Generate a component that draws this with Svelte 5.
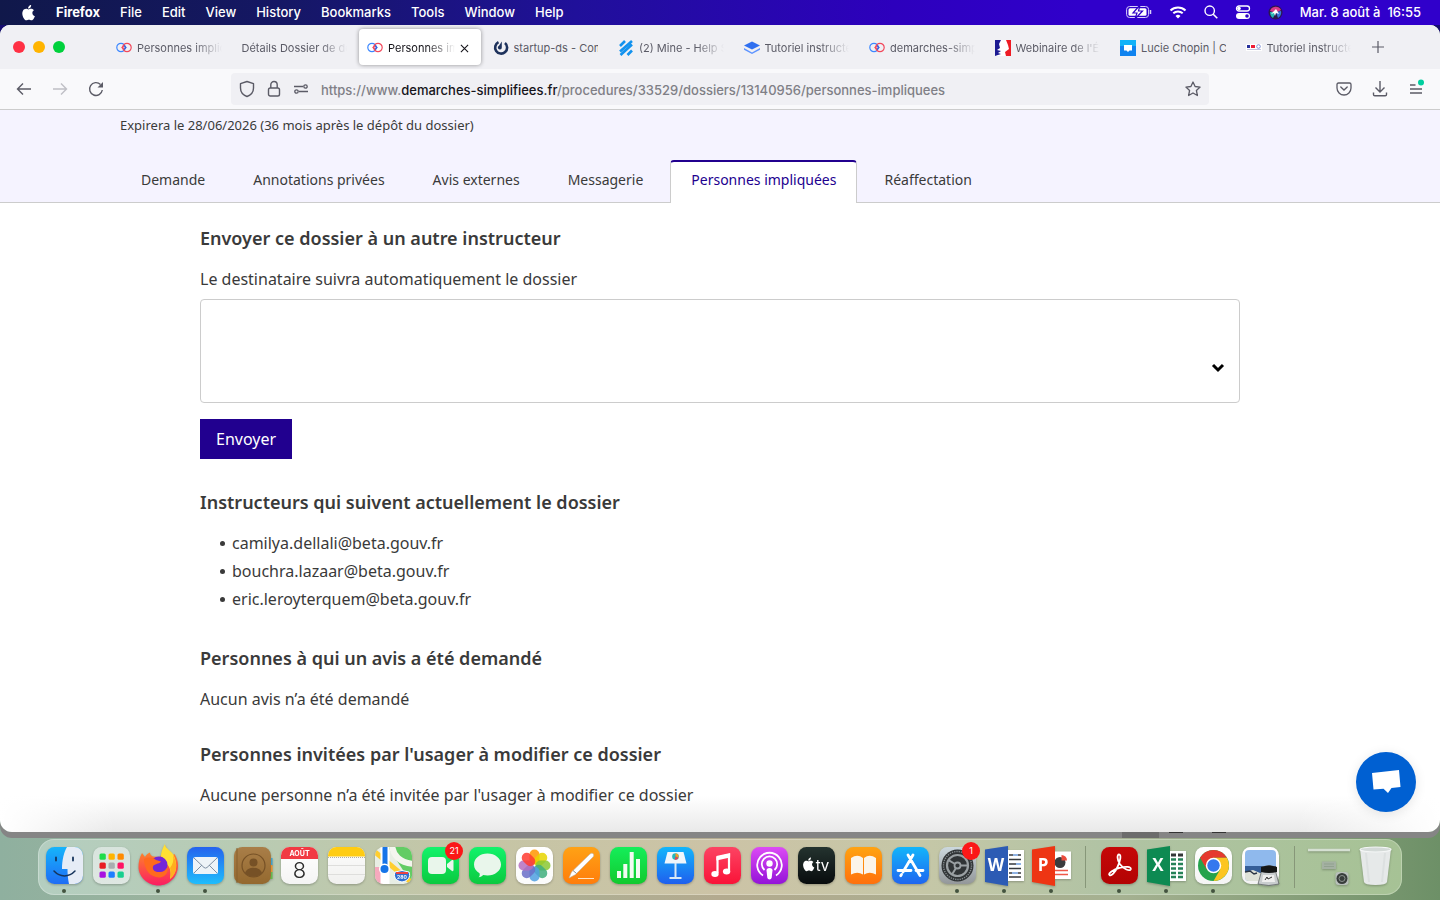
<script>
  const menus = ['File', 'Edit', 'View', 'History', 'Bookmarks', 'Tools', 'Window', 'Help'];

  const browserTabs = [
    { icon: 'rings', title: 'Personnes impliquées' },
    { icon: '', title: 'Détails Dossier de démo' },
    { icon: 'rings', title: 'Personnes impliquées', active: true },
    { icon: 'mattermost', title: 'startup-ds - Com', solid: true },
    { icon: 'help', title: '(2) Mine - Help S' },
    { icon: 'book', title: 'Tutoriel instructeur' },
    { icon: 'rings', title: 'demarches-simplifiees' },
    { icon: 'marianne', title: "Webinaire de l'État" },
    { icon: 'chat', title: 'Lucie Chopin | C', solid: true },
    { icon: 'tiny', title: 'Tutoriel instructeur' }
  ];

  const sections = ['Demande', 'Annotations privées', 'Avis externes', 'Messagerie', 'Personnes impliquées', 'Réaffectation'];
  const current = 'Personnes impliquées';

  const followers = ['camilya.dellali@beta.gouv.fr', 'bouchra.lazaar@beta.gouv.fr', 'eric.leroyterquem@beta.gouv.fr'];

  const dock = [
    [
      { id: 'finder', open: true },
      { id: 'launchpad' },
      { id: 'firefox', open: true },
      { id: 'mail', open: true },
      { id: 'contacts' },
      { id: 'calendar' },
      { id: 'notes' },
      { id: 'maps' },
      { id: 'facetime', badge: '21' },
      { id: 'messages' },
      { id: 'photos' },
      { id: 'pages' },
      { id: 'numbers' },
      { id: 'keynote' },
      { id: 'music' },
      { id: 'podcasts' },
      { id: 'tv' },
      { id: 'books' },
      { id: 'appstore' },
      { id: 'settings', badge: '1', open: true },
      { id: 'word', open: true },
      { id: 'powerpoint', open: true }
    ],
    [
      { id: 'acrobat', open: true },
      { id: 'excel', open: true },
      { id: 'chrome', open: true },
      { id: 'preview' }
    ],
    [{ id: 'minimized' }, { id: 'trash' }]
  ];

  const launchColors = ['#1fdc4a', '#ffb400', '#ff8a00', '#e81c23', '#a9adb0', '#ff1464', '#a80fe0', '#1d7dff', '#18cf8f'];
  const petals = ['#ff9500', '#e6d500', '#8ac832', '#3fae7c', '#4f9fe0', '#6a6fc8', '#b56fc0', '#ff3b30'];
  const applePath = 'M11.6 8.5c0-1.7 1.4-2.5 1.5-2.6-.8-1.2-2.1-1.4-2.500-1.400-1.100-.1-2.100.6-2.600.6s-1.400-.6-2.300-.6C4.500 4.500 3.400 5.200 2.800 6.300c-1.300 2.200-.3 5.500.9 7.300.6.9 1.300 1.900 2.300 1.800.9 0 1.300-.6 2.400-.6s1.400.6 2.400.6 1.600-.9 2.200-1.800c.7-1 1-2 1-2-.1 0-2.400-.9-2.400-3.100zM9.800 3.300c.5-.6.800-1.400.7-2.300-.7 0-1.600.5-2.100 1.100-.5.5-.9 1.400-.8 2.200.9.1 1.700-.4 2.200-1z';
</script>

{#snippet favicon(kind)}
  <svg class="fav" viewBox="0 0 16 16" aria-hidden="true">
    {#if kind === 'rings'}
      <g fill="none" stroke-width="1.200">
        <circle cx="5" cy="7.500" r="4.200" stroke="#3b87ff" />
        <circle cx="11" cy="7.500" r="4.200" stroke="#f2495c" />
        <path d="M8 5.500l2 2-2 2" stroke="#3b5fd9" />
        <path d="M8 5.500l-2 2 2 2" stroke="#f2495c" />
      </g>
    {:else if kind === 'mattermost'}
      <path d="M5.500 2.200a6 6 0 1 0 6.500.8" fill="none" stroke="#1e325c" stroke-width="2.600" />
      <path d="M8.800 1.500v6a2 2 0 1 1-2.800-1.800z" fill="#1e325c" />
    {:else if kind === 'help'}
      <path d="M2 6l5-5M2 11.500L14 1M2.500 15L14 4.500M9.500 15l4.500-4.500" stroke="#1292ee" stroke-width="2.600" />
    {:else if kind === 'book'}
      <path d="M0 5.500L8 1.500l8 4-8 4z" fill="#2f6ff0" />
      <path d="M0 8l8 4.500L16 8v1.800L8 14 0 9.800z" fill="#5c93ff" />
    {:else if kind === 'marianne'}
      <path d="M0 0h16v16H0z" fill="#fff" />
      <path d="M0 0h6L4 4l1 4-3 2 4 1-3 2 3 1-6 2z" fill="#1c1a92" />
      <path d="M11 0h5v16h-5l-1-4 4-3-1-4z" fill="#ee1c25" />
    {:else if kind === 'chat'}
      <path d="M0 0h16v16H0z" fill="#1083ef" />
      <path d="M0 0h16v6H0z" fill="#12b2f8" />
      <path d="M4 5h8v5.500H9.500L8 12l-1.500-1.500H4z" fill="#fff" />
    {:else if kind === 'tiny'}
      <path d="M0 4h16v7H0z" fill="#fff" />
      <path d="M1 5h3v3H1z" fill="#26309b" /><path d="M5 5h4v3H5z" fill="#ed1c35" />
      <circle cx="12.500" cy="6.500" r="1.800" fill="none" stroke="#8092d8" />
      <path d="M1 9.500h14" stroke="#c3c3df" />
    {/if}
  </svg>
{/snippet}

{#snippet gradient(id, top, bottom)}
  <defs>
    <linearGradient {id} x1="0" y1="0" x2="0" y2="1">
      <stop offset="0" stop-color={top} /><stop offset="1" stop-color={bottom} />
    </linearGradient>
  </defs>
{/snippet}

{#snippet tile(id, top, bottom)}
  {@render gradient('g-' + id, top, bottom)}
  <rect width="37" height="37" rx="8.500" fill="url(#g-{id})" />
{/snippet}

{#snippet appIcon(id)}
  <svg class="app-icon" viewBox="0 0 37 37" aria-hidden="true">
    {#if id === 'finder'}
      {@render tile(id, '#16b4fb', '#1f6df5')}
      <path d="M21 0h7.500A8.500 8.500 0 0 1 37 8.500v20a8.500 8.500 0 0 1-8.500 8.500H23c-1-5-1.500-9-1.500-15H16C16 13 18 5 21 0z" fill="#e6ecf6" />
      <path d="M10 10.500v3M27 10.500v3" stroke="#16345c" stroke-width="1.800" stroke-linecap="round" />
      <path d="M8 24c6 6.500 15 6.500 21 0" fill="none" stroke="#16345c" stroke-width="1.500" stroke-linecap="round" />
    {:else if id === 'launchpad'}
      {@render tile(id, '#d8e4dd', '#dfe7e2')}
      {#each launchColors as color, i}
        <rect x={6.500 + (i % 3) * 9} y={6.500 + Math.floor(i / 3) * 9} width="6.300" height="6.300" rx="1.500" fill={color} />
      {/each}
    {:else if id === 'firefox'}
      {@render gradient('g-firefox', '#ff9a1c', '#fb1d63')}
      <g transform="translate(-1 0)">
        <path d="M3 6c1 1 2 3 3 4 1-2 3-4 5-4.500 0 2 1 3 3 4l7 .5c2-3 3-7 5-12 1 5 6 6 8 10l1.500-1c2 3 3.500 7 3.500 11.500C39 30 30 38.500 19.500 38.500S-.5 30-.5 20c0-5 1-9 3.500-14z" fill="url(#g-firefox)" />
        <path d="M26-3c0 5 6 6 8.500 11C39 17 38 26 31 32c2-9-1-14-6-17-5-4-3-11 1-18z" fill="#ffe034" />
        <path d="M34 8c5 9 4 19-3 24 1-4 1-8 0-11 3-4 4-8 3-13z" fill="#ffae1f" />
        <circle cx="20" cy="18" r="8.500" fill="#7427d8" />
        <path d="M5 12c4-2 8-2 12 1l5 1.500c-2 3-7 2-8 5-1 4 3 6 7 5.500 3 0 6-2 7.500-5C30 26 25 32 17 30 9 28.500 5 20 5 12z" fill="#ff6a1e" />
      </g>
    {:else if id === 'mail'}
      {@render tile(id, '#2563ee', '#1fbdfc')}
      <rect x="6" y="10" width="25" height="17" rx="2.500" fill="#edf3f8" />
      <path d="M7 11l10 9.500q1.500 1.200 3 0L30 11M7 26l8-8M30 26l-8-8" fill="none" stroke="#7e8fa3" stroke-width="1" />
    {:else if id === 'contacts'}
      <path d="M35 11h3.500v8H35z" fill="#3f9fc9" /><path d="M35 18h3.500v7H35z" fill="#e7902c" /><path d="M35 25h3.500v7H35z" fill="#65b94b" />
      {@render tile(id, '#a97e48', '#94692f')}
      <path d="M3 1v35" stroke="#87602c" />
      <g fill="none" stroke="#765126" stroke-width="1.200"><circle cx="19.500" cy="18.500" r="11.500" /></g>
      <circle cx="19.500" cy="15.500" r="4" fill="#765126" /><path d="M11 26c2-7 15-7 17 0-4 5-13 5-17 0z" fill="#765126" />
    {:else if id === 'calendar'}
      {@render tile(id, '#ffffff', '#f4f4f4')}
      <path d="M0 12V8.500A8.500 8.500 0 0 1 8.500 0h20A8.500 8.500 0 0 1 37 8.500V12z" fill="#f13a43" />
      <text x="18.500" y="9" class="month">AOÛT</text>
      <text x="18.500" y="31" class="day">8</text>
    {:else if id === 'notes'}
      {@render tile(id, '#fdfdfd', '#f0f0ee')}
      <path d="M0 9.500v-1A8.500 8.500 0 0 1 8.500 0h20A8.500 8.500 0 0 1 37 8.500v1z" fill="#ffcc12" />
      <path d="M0 10.500h37" stroke="#b5b09c" stroke-dasharray="1 1" /><path d="M0 18.500h37M0 27.500h37" stroke="#dededc" />
    {:else if id === 'maps'}
      <defs><clipPath id="map-clip"><rect width="37" height="37" rx="8.500" /></clipPath></defs>
      <g clip-path="url(#map-clip)">
        <path d="M0 0h37v37H0z" fill="#e8eee4" /><path d="M13 0h24v37z" fill="#63cc64" />
        <path d="M0 20h8v17H0z" fill="#f6a9bd" /><path d="M0 5l37 31" stroke="#ffce2e" stroke-width="5" />
        <path d="M17-4c0 12 8 21 24 21" fill="none" stroke="#f4f5ee" stroke-width="6" />
        <path d="M10 0v37" stroke="#fff" stroke-width="9" /><path d="M10 0v21" stroke="#1674e8" stroke-width="5" />
      </g>
      <circle cx="9.500" cy="22" r="5.500" fill="#fff" /><circle cx="9.500" cy="22" r="4" fill="#1674e8" />
      <path d="M20 25q7-3 14 0c2 5-1 9-7 10-6-1-9-5-7-10z" fill="#2e6fd0" stroke="#fff" /><path d="M21 25h12v2H21z" fill="#e84242" />
      <text x="27" y="32" class="route">280</text>
    {:else if id === 'facetime'}
      {@render tile(id, '#12f36b', '#0bc93f')}
      <rect x="6" y="10" width="18" height="17" rx="4" fill="#e9f6eb" /><path d="M25 17l5-4q1.500-.5 1.500 1v9q0 1.500-1.500 1l-5-4z" fill="#e9f6eb" />
    {:else if id === 'messages'}
      {@render tile(id, '#12f36b', '#0bc93f')}
      <path d="M18.500 6.500c7.500 0 13.500 4.700 13.500 11s-6 11-13.500 11c-1.500 0-3-.2-4.300-.5-1 1.300-2.500 2-4.700 2.300 1.300-1 1.500-2.500 1-4C7 24.300 5 21.200 5 17.500c0-6.300 6-11 13.500-11z" fill="#e9f6eb" />
    {:else if id === 'photos'}
      {@render tile(id, '#ffffff', '#fbfbfb')}
      {#each petals as color, i}
        <rect x="13.500" y="2.500" width="10" height="15" rx="5" fill={color} fill-opacity=".85" transform="rotate({i * 45} 18.500 18.500)" />
      {/each}
    {:else if id === 'pages'}
      {@render tile(id, '#ffa215', '#ff7d0c')}
      <path d="M15 31.500h16" stroke="#ffe4c4" />
      <path d="M27 7q2-1.500 3.200-.3t0 3.100L12.500 27.500 6 31l2.500-6z" fill="#fff" stroke="#bcb3a8" stroke-width=".6" /><path d="M10 23.500l3.500 3" stroke="#8e8e8e" stroke-width="1" />
    {:else if id === 'numbers'}
      {@render tile(id, '#14ee5a', '#12c92e')}
      <path d="M7 24h4v7H7zM13.300 17h4v14h-4zM19.700 5h4v26h-4zM26 12h4v19h-4z" fill="#f2fbf2" />
    {:else if id === 'keynote'}
      {@render tile(id, '#12b6fb', '#1f5fee')}
      <path d="M10.500 5h16l3 11.500h-22z" fill="#eff6fb" /><path d="M17.500 16h2v15h-2z" fill="#d8e9f6" /><path d="M12.500 30h12v2h-12z" fill="#d8e9f6" />
      <circle cx="18.500" cy="9.500" r="3.300" fill="#22b7bf" /><path d="M18.500 9.500V6.200a3.300 3.300 0 0 1 3 4.300z" fill="#f59b24" /><path d="M18.500 9.500l3 1.500a3.300 3.300 0 0 1-4 1.500z" fill="#e44555" />
    {:else if id === 'music'}
      {@render tile(id, '#fc4463', '#fa1338')}
      <path d="M13.500 26V10.500L25 7.800v15.700" fill="none" stroke="#fff" stroke-width="2.200" /><path d="M12.400 9l13.700-3v4.500l-13.700 3z" fill="#fff" />
      <ellipse cx="11" cy="27" rx="3.700" ry="3" fill="#fff" /><ellipse cx="22.600" cy="24.500" rx="3.700" ry="3" fill="#fff" />
    {:else if id === 'podcasts'}
      {@render tile(id, '#dc4bf5', '#9413d8')}
      <g fill="none" stroke="#fff" stroke-width="1.800"><path d="M12 28.500a12.300 12.300 0 1 1 13 0" /><path d="M13.500 23a7.700 7.700 0 1 1 10 0" /></g>
      <circle cx="18.500" cy="16.500" r="3.200" fill="#fff" /><path d="M15.500 23.500q0-2.500 3-2.500t3 2.500l-.8 7q-.3 2-2.200 2t-2.200-2z" fill="#fff" />
    {:else if id === 'tv'}
      {@render tile(id, '#24332f', '#080c0d')}
      <path d={applePath} fill="#fff" transform="translate(3 9.500) scale(.95)" />
      <text x="24.500" y="23.500" class="tv">tv</text>
    {:else if id === 'books'}
      {@render tile(id, '#ffa312', '#ff700c')}
      <path d="M6 11q6.500-4.500 12 0v16.500q-5.500-3.500-12 0zM19 11q5.500-4.500 12 0v16.500q-6.500-3.500-12 0z" fill="#fbf4ea" />
    {:else if id === 'appstore'}
      {@render tile(id, '#13b5fa', '#1f66f0')}
      <path d="M16 8l12 20.500M21 8L11 25M6 23.500h13M24 23.500h7M9.500 27.500l-.8 1.200" stroke="#fff" stroke-width="2.800" stroke-linecap="round" />
    {:else if id === 'settings'}
      {@render tile(id, '#ccd8dd', '#93979a')}
      <circle cx="18.500" cy="18.500" r="16" fill="#303436" /><circle cx="18.500" cy="18.500" r="14" fill="none" stroke="#858c8f" stroke-width="1.400" stroke-dasharray="1.300 1" />
      <circle cx="18.500" cy="18.500" r="10.500" fill="none" stroke="#9aa0a3" stroke-width="2.200" />
      <circle cx="18.500" cy="18.500" r="3" fill="none" stroke="#9aa0a3" stroke-width="1.800" />
      <path d="M16 17L9.500 13.200M21.500 18.500H29M17 21l-4 6.500" stroke="#9aa0a3" stroke-width="2" />
    {:else if id === 'word'}
      <g transform="translate(-1 0)">
        <path d="M20 3h19v31H20z" fill="#fff" /><path d="M24 8h12M24 12.500h12M24 17h12M24 21.500h12M24 26h12M24 30h12" stroke="#37393d" stroke-width="1.500" /><path d="M28 8h5M31 17h5M27 26h6" stroke="#90b3e4" stroke-width="2" />
        <path d="M0 2.500L23-1v40L0 35z" fill="#2c5bb4" /><text x="11" y="24" class="office">W</text>
      </g>
    {:else if id === 'powerpoint'}
      <g transform="translate(-1 0)">
        <path d="M20 4.500h19V32H20z" fill="#fff" /><circle cx="28" cy="15.500" r="5.500" fill="#3b3b3d" /><path d="M29.500 13.500V8a5.500 5.500 0 0 1 5.500 5.500z" fill="#e94b3c" /><path d="M23 23.500h13M23 27.500h13" stroke="#ee5747" stroke-width="1.500" />
        <path d="M0 2.500L23-1v40L0 35z" fill="#ee3513" /><text x="11" y="24" class="office">P</text>
      </g>
    {:else if id === 'acrobat'}
      {@render tile(id, '#c50808', '#b30303')}
      <path d="M8.500 28c-2-1.500 4-5.500 10-7.200 6-1.600 12-1.300 11.300 1.400-.8 2.600-7.300-.2-10.800-5C15.800 12.500 16 7.500 18 7.500c2.500 0 1.500 6-1.500 12.500-2.500 5.500-6.300 9.500-8 8z" fill="none" stroke="#fff" stroke-width="1.800" />
    {:else if id === 'excel'}
      <g transform="translate(-1 0)">
        <path d="M20 4h19v30H20z" fill="#fff" /><path d="M24 8h5M31 8h5" stroke="#353738" stroke-width="3" /><path d="M24 12.500h5M31 12.500h5M24 17h5M31 17h5M24 21.500h5M31 21.500h5M24 26h5M31 26h5M24 30h5M31 30h5" stroke="#268258" stroke-width="2.500" />
        <path d="M0 2.500L23-1v40L0 35z" fill="#0d8a52" /><text x="11" y="24" class="office">X</text>
      </g>
    {:else if id === 'chrome'}
      {@render tile(id, '#ffffff', '#f4f4f4')}
      <circle cx="18.500" cy="18.500" r="15.500" fill="#25a24c" />
      <path d="M5.080 10.750A15.500 15.500 0 0 1 31.920 10.750H18.500v7.750z" fill="#e53a2f" /><path d="M5.080 10.750L11.800 22.400l6.700-3.900V10.750z" fill="#e53a2f" />
      <path d="M31.920 10.750A15.500 15.500 0 0 1 18.500 34l6.700-11.600-6.700-11.650z" fill="#fcc521" />
      <circle cx="18.500" cy="18.500" r="7.700" fill="#fff" /><circle cx="18.500" cy="18.500" r="6.200" fill="#3478ee" />
    {:else if id === 'preview'}
      {@render tile(id, '#ffffff', '#f2f2f2')}
      <rect x="3" y="3" width="31" height="31" rx="4" fill="#8fb9ed" /><path d="M3 19h31v8H3z" fill="#355e98" /><path d="M3 25l8-2 7 3 16-1v5a4 4 0 0 1-4 4H7a4 4 0 0 1-4-4z" fill="#dfe2d8" /><path d="M3 25l5-1 4 3 3-1" fill="none" stroke="#2b3544" stroke-width="1.500" />
      <path d="M20 20q7-3 14 0v6l3 11q-10 3-21 0l3-11z" fill="#c9cdcf" stroke="#55595b" stroke-width=".7" /><path d="M19 20q8-3 16 0v5q-8 2-16 0z" fill="#141617" /><path d="M21 28h11l1 7H20z" fill="#eee" /><path d="M23 33l2-3 1 2 4-2" stroke="#333" fill="none" />
    {:else if id === 'minimized'}
      <path d="M-2 3h42" stroke="#d5e0d2" stroke-width="2.500" /><rect x="12" y="14.500" width="14" height="7.500" fill="#a4b1a2" /><path d="M14 17h10M14 19.500h10" stroke="#91a18f" />
      <rect x="25.500" y="25" width="13" height="13" rx="3" fill="#b8c0ba" /><circle cx="32" cy="31.500" r="5.500" fill="#383d3b" /><circle cx="32" cy="31.500" r="3" fill="none" stroke="#8c9490" />
    {:else if id === 'trash'}
      <path d="M3 2l4 33q.5 3 11.500 3T30 35l4-33z" fill="#e6e9e9" /><path d="M9 6l3 29M28 6l-3 29" stroke="#dce0e0" stroke-width="2" />
      <ellipse cx="18.500" cy="2.500" rx="15.500" ry="2.500" fill="#d4dad8" stroke="#f5f7f7" stroke-width="1.200" />
    {/if}
  </svg>
{/snippet}

<div class="desktop">
  <header class="menubar">
    <nav class="menus" aria-label="Menu">
      <svg class="apple" viewBox="1 0 14 16" aria-label="Apple"><path d={applePath} fill="#fff" /></svg>
      <strong>Firefox</strong>
      {#each menus as menu}<span>{menu}</span>{/each}
    </nav>
    <div class="status">
      <svg width="26" height="14" viewBox="0 0 26 14" aria-hidden="true">
        <rect x=".6" y="1.500" width="22" height="11" rx="3" fill="none" stroke="#d8d0fa" /><rect x="2.500" y="3.300" width="18" height="7.500" rx="1.500" fill="#fff" />
        <path d="M14 0L7 8h4l-2 6 7.500-8h-4z" fill="#fff" stroke="#2e00c6" stroke-width="1.200" /><path d="M24.500 5v4" stroke="#d8d0fa" stroke-width="1.500" />
      </svg>
      <svg width="18" height="14" viewBox="0 0 18 14" aria-hidden="true">
        <path d="M1.500 5.500a10.800 10.800 0 0 1 15 0M4.300 8.300a6.900 6.900 0 0 1 9.400 0" fill="none" stroke="#fff" stroke-width="2" /><path d="M9 13.500L6.500 11a3.500 3.500 0 0 1 5 0z" fill="#fff" />
      </svg>
      <svg width="14" height="14" viewBox="0 0 14 14" aria-hidden="true"><circle cx="5.700" cy="5.700" r="4.700" fill="none" stroke="#fff" stroke-width="1.400" /><path d="M9.200 9.200L13.300 13.300" stroke="#fff" stroke-width="1.600" /></svg>
      <svg width="16" height="14" viewBox="0 0 16 14" aria-hidden="true">
        <rect x="1.500" y="1" width="13" height="5" rx="2.500" fill="none" stroke="#fff" stroke-width="1.300" /><circle cx="4" cy="3.500" r="1.800" fill="#fff" /><rect x="1" y="8" width="14" height="6" rx="3" fill="#fff" /><circle cx="12" cy="11" r="1.800" fill="#2e00c6" />
      </svg>
      <svg width="15" height="15" viewBox="0 0 15 15" aria-hidden="true">
        <circle cx="7.500" cy="7.500" r="7" fill="#2a1650" /><path d="M2 6a6 6 0 0 1 11-1L8 8z" fill="#d8388b" /><path d="M2 7l6 0-3 6q-3-2-3-6z" fill="#25b5b2" /><path d="M13 6l-5 1 2 6q4-3 3-7z" fill="#3973d8" /><path d="M3 9l5-5 3 5-3-1-1 3-1-3z" fill="#fff" />
      </svg>
      <time>Mar. 8 août à&nbsp; 16:55</time>
    </div>
  </header>

  <main class="window">
    <div class="tabstrip">
      <div class="lights"><i class="red"></i><i class="amber"></i><i class="green"></i></div>
      <div class="tabs" role="tablist">
        {#each browserTabs as tab}
          <button class="tab" class:active={tab.active} role="tab" aria-selected={!!tab.active}>
            {#if tab.icon}{@render favicon(tab.icon)}{/if}
            <span class="tab-title" class:solid={tab.solid}>{tab.title}</span>
            {#if tab.active}
              <svg class="close" viewBox="0 0 10 10" aria-hidden="true"><path d="M1 1l8 8M9 1L1 9" stroke="#15141a" stroke-width="1.200" /></svg>
            {/if}
          </button>
        {/each}
      </div>
      <button class="new-tab" aria-label="Nouvel onglet"><svg width="12" height="12" viewBox="0 0 12 12"><path d="M6 0v12M0 6h12" stroke="#5b5b66" stroke-width="1.200" /></svg></button>
    </div>

    <div class="toolbar">
      <div class="nav-buttons">
        <button aria-label="Précédent"><svg width="16" height="16" viewBox="0 0 16 16"><path d="M15 8H1.500M7 2.500L1.500 8 7 13.500" fill="none" stroke="#5b5b66" stroke-width="1.400" /></svg></button>
        <button aria-label="Suivant" disabled><svg width="16" height="16" viewBox="0 0 16 16"><path d="M1 8h13.500M9 2.500L14.500 8 9 13.500" fill="none" stroke="#bfbfc5" stroke-width="1.400" /></svg></button>
        <button aria-label="Actualiser"><svg width="16" height="16" viewBox="0 0 16 16"><path d="M14.300 9A6.400 6.400 0 1 1 12.500 3.500" fill="none" stroke="#5b5b66" stroke-width="1.400" /><path d="M15 1v5.500H9.500z" fill="#5b5b66" /></svg></button>
      </div>
      <div class="urlbar">
        <svg width="16" height="18" viewBox="0 0 16 18" aria-hidden="true"><path d="M8 1.500l6.500 2.200V8c0 4-2.500 7-6.500 8.500C4 15 1.500 12 1.500 8V3.700z" fill="none" stroke="#5b5b66" stroke-width="1.400" stroke-linejoin="round" /></svg>
        <svg width="14" height="18" viewBox="0 0 14 18" aria-hidden="true"><rect x="1.500" y="8" width="11" height="8" rx="1.800" fill="none" stroke="#5b5b66" stroke-width="1.400" /><path d="M3.800 8V4.700a3.200 3.200 0 0 1 6.400 0V8" fill="none" stroke="#5b5b66" stroke-width="1.400" /></svg>
        <svg width="16" height="12" viewBox="0 0 16 12" aria-hidden="true"><g fill="none" stroke="#5b5b66" stroke-width="1.300"><path d="M1 3.500h9M6 8.500h9" /><circle cx="12.500" cy="3.500" r="1.700" /><circle cx="3.500" cy="8.500" r="1.700" /></g></svg>
        <span class="url">https://www.<b>demarches-simplifiees.fr</b>/procedures/33529/dossiers/13140956/personnes-impliquees</span>
        <button aria-label="Marquer cette page"><svg width="16" height="16" viewBox="0 0 16 16"><path d="M8 1l2.100 4.500 5 .6-3.700 3.400 1 5L8 12l-4.400 2.500 1-5L.9 6.100l5-.6z" fill="none" stroke="#5b5b66" stroke-width="1.300" stroke-linejoin="round" /></svg></button>
      </div>
      <div class="tools">
        <button aria-label="Pocket"><svg width="16" height="16" viewBox="0 0 16 16"><path d="M2.500 2h11q1.500 0 1.500 1.500V7A7 7 0 0 1 1 7V3.500Q1 2 2.500 2z" fill="none" stroke="#5b5b66" stroke-width="1.300" /><path d="M4.800 6L8 9l3.200-3" fill="none" stroke="#5b5b66" stroke-width="1.400" stroke-linecap="round" /></svg></button>
        <button aria-label="Téléchargements"><svg width="16" height="16" viewBox="0 0 16 16"><path d="M8 0v10.500M3.500 6.500L8 11l4.500-4.500M1.500 11.500v2q0 1.300 1.300 1.300h10.400q1.300 0 1.300-1.300v-2" fill="none" stroke="#5b5b66" stroke-width="1.400" /></svg></button>
        <button aria-label="Menu de l'application"><svg width="16" height="16" viewBox="0 0 16 16"><path d="M2 4h5.500M2 8h12M2 12h12" stroke="#5b5b66" stroke-width="1.300" /><circle cx="13" cy="1.500" r="3" fill="#00cf9f" /></svg></button>
      </div>
    </div>

    <div class="dossier-head">
      <p>Expirera le 28/06/2026 (36 mois après le dépôt du dossier)</p>
      <nav class="sections">
        {#each sections as section}<a href="#top" class:current={section === current}>{section}</a>{/each}
      </nav>
    </div>

    <div class="content">
      <form onsubmit={(event) => event.preventDefault()}>
        <h2>Envoyer ce dossier à un autre instructeur</h2>
        <label for="recipient">Le destinataire suivra automatiquement le dossier</label>
        <div class="combo">
          <input id="recipient" type="text" autocomplete="off" />
          <svg width="14" height="10" viewBox="0 0 14 10" aria-hidden="true"><path d="M2 2l5 5 5-5" fill="none" stroke="#000" stroke-width="3" /></svg>
        </div>
        <button class="send">Envoyer</button>
      </form>
      <section>
        <h2>Instructeurs qui suivent actuellement le dossier</h2>
        <ul>{#each followers as follower}<li>{follower}</li>{/each}</ul>
      </section>
      <section>
        <h2>Personnes à qui un avis a été demandé</h2>
        <p>Aucun avis n’a été demandé</p>
      </section>
      <section>
        <h2>Personnes invitées par l'usager à modifier ce dossier</h2>
        <p>Aucune personne n’a été invitée par l'usager à modifier ce dossier</p>
      </section>
    </div>

    <button class="chat" aria-label="Discussion"><svg width="30" height="26" viewBox="0 0 30 26"><path d="M1 4L28 1l1.500 17-9 1-3.500 5-4.500-4.300-10 .8z" fill="#fff" /></svg></button>
  </main>

  <footer class="dock">
    {#each dock as group, g}
      {#if g > 0}<span class="divider"></span>{/if}
      {#each group as app}
        <div class="app" class:open={app.open}>
          {@render appIcon(app.id)}
          {#if app.badge}<span class="badge">{app.badge}</span>{/if}
        </div>
      {/each}
    {/each}
  </footer>
</div>

<style>
  :global(body) { margin: 0; }
  .desktop, .desktop * { box-sizing: border-box; }
  .desktop {
    min-height: 100vh;
    display: flex;
    flex-direction: column;
    font-family: Inter, 'Liberation Sans', sans-serif;
    background: linear-gradient(90deg, #8fb09f 0%, #a8b69b 25%, #b3aa8f 50%, #a5b191 78%, #6d9067 100%);
  }
  button { border: 0; padding: 0; background: none; font: inherit; color: inherit; display: flex; align-items: center; justify-content: center; }
  svg { flex: none; display: block; overflow: visible; }
  h2, p, ul { margin: 0; padding: 0; }

  .menubar {
    height: 25px;
    display: flex;
    justify-content: space-between;
    align-items: center;
    padding: 0 19px 1px 21px;
    color: #fff;
    font-size: 13px;
    font-weight: 500;
    white-space: nowrap;
    background: linear-gradient(90deg, #10184a 0%, #151765 20%, #20109a 40%, #2d00bd 62%, #3000cb 75%);
  }
  .menus { display: flex; align-items: center; gap: 20px; }
  .menus strong { font-weight: 700; }
  .apple { width: 15px; height: 17px; }
  .status { display: flex; align-items: center; gap: 17px; }

  .window {
    position: relative;
    flex: 1;
    display: flex;
    flex-direction: column;
    margin-bottom: 7px;
    border-radius: 10px 10px 12px 12px;
    background:
      linear-gradient(#fff, #fff) top / 100% calc(100% - 36px) no-repeat,
      linear-gradient(90deg, #fff, transparent 8%, transparent 90%, #fff),
      linear-gradient(0deg, #e9e9e9, #fff 36px);
    box-shadow: 0 6px 0 #858585, 0 -10px 0 #160c70;
    clip-path: inset(0 0 -6px 0);
  }
  /* edge of the window lying behind */
  .window::after {
    content: '';
    position: absolute;
    left: 0;
    right: 0;
    bottom: -6px;
    height: 6px;
    background:
      linear-gradient(#333, #333) 82% 0 / 14px 1px no-repeat,
      linear-gradient(#333, #333) 85% 0 / 14px 1px no-repeat,
      linear-gradient(#6c6c6c, #6c6c6c) 80% 0 / 37px 100% no-repeat;
  }

  .tabstrip { height: 44px; display: flex; align-items: center; padding-right: 43px; background: #f0f0f4; border-radius: 10px 10px 0 0; }
  .lights { width: 108px; display: flex; gap: 8px; padding-left: 13px; }
  .lights i { width: 12px; height: 12px; border-radius: 50%; }
  .red { background: #ff3044; }
  .amber { background: #ffb400; }
  .green { background: #00d13c; }
  .tabs { flex: 1; min-width: 0; display: flex; gap: 4px; }
  .tab { flex: 1 1 0; min-width: 0; height: 36px; padding: 2px 8px 0 8px; gap: 5px; justify-content: flex-start; border-radius: 4px; font-size: 11px; color: #5b5b66; }
  .tab.active { background: #fff; color: #15141a; box-shadow: 0 0 4px rgb(0 0 0 / 40%); }
  .fav { width: 16px; height: 16px; }
  .tab-title { flex: 1; min-width: 0; overflow: hidden; text-align: left; white-space: nowrap; mask-image: linear-gradient(to left, transparent, #000 28px); }
  .tab-title.solid { mask-image: none; }
  .close { width: 9px; height: 9px; margin-right: 4px; }
  .new-tab { width: 38px; height: 36px; }

  .toolbar { height: 41px; display: grid; grid-template-columns: 231fr 978fr 231fr; align-items: center; background: #f9f9fb; border-bottom: 1px solid #ccc; }
  .nav-buttons { display: flex; gap: 20px; padding-left: 16px; }
  .tools { display: flex; justify-content: flex-end; gap: 20px; padding-right: 16px; }
  .urlbar { height: 32px; min-width: 0; display: flex; align-items: center; gap: 12px; padding: 0 8px; background: #f0f0f4; border-radius: 4px; }
  .url { flex: 1; min-width: 0; padding-top: 2px; overflow: hidden; white-space: nowrap; font-size: 13px; font-weight: 500; color: #7f7f86; }
  .url b { font-weight: 500; color: #15141a; }

  .dossier-head, .content, .chat { font-family: 'Noto Sans', 'Open Sans', sans-serif; color: #3a3a3a; }
  .dossier-head { padding: 5px 120px 0; background: #f5f3ff; border-bottom: 1px solid #ccc; }
  .dossier-head p { font-size: 13px; line-height: 20px; }
  .sections { display: flex; gap: 6px; margin-top: 25px; margin-bottom: -1px; }
  .sections a { padding: 5px 20px 11px; border: 1px solid transparent; border-top-width: 2px; border-bottom: 0; border-radius: 4px 4px 0 0; font-size: 14px; line-height: 25px; color: inherit; text-decoration: none; white-space: nowrap; }
  .sections .current { background: #fff; border-color: #21008f #ccc; color: #21008f; }

  .content { padding: 24px 200px; display: flex; flex-direction: column; gap: 32px; font-size: 16px; line-height: 24px; }
  h2 { margin-bottom: 17px; font-size: 18px; line-height: 23px; font-weight: 600; }
  label { display: block; margin-bottom: 8px; }
  .combo { height: 104px; display: flex; align-items: center; padding: 34px 14px 0; border: 1px solid #ccc; border-radius: 4px; }
  .combo input { flex: 1; min-width: 0; border: 0; outline: 0; background: none; font: inherit; }
  .send { height: 40px; margin-top: 16px; padding: 0 16px; background: #21008f; color: #fff; }
  ul { padding-left: 20px; list-style: none; }
  li { display: flex; align-items: center; gap: 7px; margin-bottom: 4px; }
  li::before { content: ''; width: 5px; height: 5px; border-radius: 50%; background: #3a3a3a; }
  .chat { position: absolute; right: 24px; bottom: 20px; width: 60px; height: 60px; border-radius: 50%; background: #0060d2; box-shadow: 0 2px 12px rgb(0 0 0 / 10%); }

  .dock {
    align-self: center;
    display: flex;
    height: 56px;
    margin-bottom: 5px;
    padding: 8px 3px 0;
    border-radius: 16px;
    background: linear-gradient(90deg, #b4cec0 0%, #b8cbb3 15%, #c5c5a5 32%, #ccc3a6 50%, #c5c7a7 65%, #b1c3a4 78%, #a6c295 100%);
    box-shadow: inset 0 0 0 1px rgb(255 255 255 / 25%);
  }
  .app { position: relative; width: 47px; padding-left: 5px; }
  .app-icon { width: 37px; height: 37px; filter: drop-shadow(0 1px 1px rgb(0 0 0 / 25%)); }
  .app.open::after { content: ''; position: absolute; left: 21px; top: 42px; width: 4px; height: 4px; border-radius: 50%; background: #43533f; }
  .badge { position: absolute; right: 1px; top: -5px; width: 18px; height: 18px; border-radius: 50%; background: #fb1717; color: #fff; font-size: 9px; line-height: 18px; text-align: center; }
  .divider { width: 21px; height: 42px; margin-top: -1px; background: linear-gradient(#879779, #879779) center / 1px 100% no-repeat; }
  text { fill: #fff; text-anchor: middle; }
  .month { font-size: 7px; font-weight: 700; }
  .day { font-size: 22px; fill: #2b2b2b; font-weight: 300; }
  .route { font-size: 5px; font-weight: 700; }
  .tv { font-size: 15px; }
  .office { font-family: 'Open Sans', sans-serif; font-size: 17px; font-weight: 700; }
</style>
